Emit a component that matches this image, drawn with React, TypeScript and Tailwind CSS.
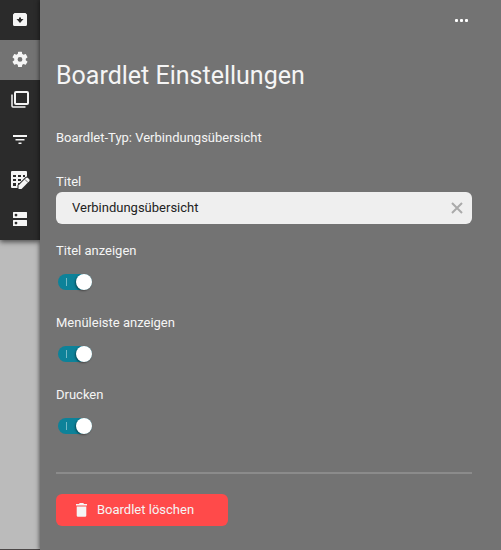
import { useState, type ReactNode } from "react";

function Icon({ children }: { children: ReactNode }) {
  return (
    <svg viewBox="0 0 20 20" className="size-5 fill-current" aria-hidden="true">
      {children}
    </svg>
  );
}

const tools: { name: string; icon: ReactNode }[] = [
  {
    name: "Archiv",
    icon: (
      <path
        fillRule="evenodd"
        d="M4.500 3h11l1.500 1.500v10a1.500 1.500 0 0 1-1.500 1.500h-11A1.500 1.500 0 0 1 3 14.500v-10zM9 7.500v1.500H6.500L10 13l3.500-4H11v-1.500z"
      />
    ),
  },
  {
    name: "Einstellungen",
    icon: (
      <path
        transform="translate(.4 -.2) scale(.8)"
        d="M19.140 12.940c.04-.3.060-.61.060-.94 0-.32-.02-.64-.07-.94l2.030-1.580a.49.49 0 0 0 .12-.61l-1.920-3.320a.49.49 0 0 0-.59-.22l-2.390.96c-.5-.38-1.030-.7-1.620-.94l-.36-2.540a.48.48 0 0 0-.48-.41h-3.840a.47.47 0 0 0-.47.41l-.36 2.540c-.59.24-1.130.57-1.620.94l-2.390-.96a.48.48 0 0 0-.59.22L2.740 8.870a.47.47 0 0 0 .12.61l2.030 1.580c-.05.3-.09.63-.09.94s.02.64.070.94l-2.030 1.580a.49.49 0 0 0-.12.61l1.920 3.320c.12.22.37.29.59.22l2.390-.96c.5.38 1.030.7 1.620.94l.36 2.540c.05.24.24.41.48.41h3.840c.24 0 .44-.17.47-.41l.36-2.540c.59-.24 1.130-.56 1.620-.94l2.390.96c.22.080.47 0 .59-.22l1.920-3.320a.47.47 0 0 0-.12-.61zM12 15A3 3 0 1 1 12 9a3 3 0 0 1 0 6"
      />
    ),
  },
  {
    name: "Ebenen",
    icon: (
      <g fill="none" stroke="currentColor">
        <rect x="5" y="2" width="13" height="12" rx="1" strokeWidth="2" />
        <path d="M2 4.500v11.500a1 1 0 0 0 1 1h12.500" strokeWidth="1.500" />
      </g>
    ),
  },
  {
    name: "Filter",
    icon: <path d="M3 5h14v2H3zM5.500 9h9v1.500h-9zM8.500 12.500h3V14h-3z" />,
  },
  {
    name: "Tabelle bearbeiten",
    icon: (
      <>
        <path
          fillRule="evenodd"
          d="M2 1h14a1 1 0 0 1 1 1v7l-8 8v1H2a1 1 0 0 1-1-1V2a1 1 0 0 1 1-1zM3 5v2h3V5zM8 5v2h3V5zM13 5v2h2V5zM3 9v2h3V9zM8 9v2h3V9zM3 13v3h3V13zM8 13v3l3-3z"
        />
        <path
          d="M8.500 15.500L16 8a1.500 1.500 0 0 1 2 0l1.200 1.200a1.500 1.500 0 0 1 0 2L11.500 19h-3z"
          stroke="#2b2b2b"
          strokeWidth="2"
          paintOrder="stroke"
        />
        <path d="M15 9.500l3 3" stroke="#2b2b2b" strokeWidth=".7" />
      </>
    ),
  },
  {
    name: "Datenspeicher",
    icon: (
      <path
        fillRule="evenodd"
        d="M3.500 2h13a.5.5 0 0 1 .5.5v5a.5.5 0 0 1-.5.5h-13a.5.5 0 0 1-.5-.5v-5a.5.5 0 0 1 .5-.5zM6 3.700a1.400 1.400 0 1 0 0 2.800 1.400 1.400 0 0 0 0-2.800zM3.500 10h13a.5.5 0 0 1 .5.5v5a.5.5 0 0 1-.5.5h-13a.5.5 0 0 1-.5-.5v-5a.5.5 0 0 1 .5-.5zM6 11.700a1.400 1.400 0 1 0 0 2.800 1.400 1.400 0 0 0 0-2.800z"
      />
    ),
  },
];

function Toggle({ id, label }: { id: string; label: string }) {
  const [on, setOn] = useState(true);
  return (
    <div className="flex h-[72px] flex-col items-start">
      <label htmlFor={id} className="leading-5">
        {label}
      </label>
      <span className="relative mt-[13px] ml-0.5 block h-4 w-[34px]">
        <input
          id={id}
          type="checkbox"
          role="switch"
          checked={on}
          onChange={(e) => setOn(e.target.checked)}
          className="peer block h-4 w-[34px] cursor-pointer appearance-none rounded-full bg-[#999] checked:bg-[#0d8299]"
        />
        <span className="pointer-events-none absolute top-1 left-2 h-2 w-px bg-[#75b9c6]" />
        <span className="pointer-events-none absolute top-0 left-0 size-4 rounded-full bg-white shadow-[-1px_1px_2px_rgba(0,0,0,0.4)] peer-checked:left-[18px]" />
      </span>
    </div>
  );
}

export default function App() {
  const [title, setTitle] = useState("Verbindungsübersicht");
  return (
    <div className="flex min-h-screen bg-[#bbb] font-['Roboto',sans-serif] text-[13px] text-[#f5f5f5]">
      <nav className="w-10 shrink-0 border-b border-[#4b4747]">
        <div className="bg-[#2b2b2b] shadow-[0_2px_5px_rgba(0,0,0,0.6)]">
          {tools.map((tool) => (
            <button
              key={tool.name}
              type="button"
              aria-label={tool.name}
              className={`flex size-10 items-center justify-center ${tool.name === "Einstellungen" ? "bg-[#737373]" : ""}`}
            >
              <Icon>{tool.icon}</Icon>
            </button>
          ))}
        </div>
      </nav>

      <main className="flex flex-1 flex-col bg-[#737373] pr-[29px] pl-4 shadow-[-1px_0_4px_rgba(0,0,0,0.5)]">
        <div className="flex h-10 items-center justify-end">
          <button type="button" aria-label="Mehr" className="flex h-6 items-center gap-0.5 pr-1 text-white">
            <span className="size-[3px] rounded-[1px] bg-current" />
            <span className="size-[3px] rounded-[1px] bg-current" />
            <span className="size-[3px] rounded-[1px] bg-current" />
          </button>
        </div>

        <h1 className="mt-5 text-[25px] leading-8">Boardlet Einstellungen</h1>
        <p className="mt-9 leading-5">Boardlet-Typ: Verbindungsübersicht</p>

        <label htmlFor="title" className="mt-6 leading-5">
          Titel
        </label>
        <div className="flex h-8 items-center rounded-md bg-[#efefef] pr-2 pl-4 text-[#222]">
          <input
            id="title"
            type="text"
            value={title}
            onChange={(e) => setTitle(e.target.value)}
            className="min-w-0 flex-1 bg-transparent outline-none"
          />
          <button type="button" aria-label="Titel leeren" onClick={() => setTitle("")} className="text-[#aaa]">
            <svg viewBox="0 0 14 14" className="size-3.5" aria-hidden="true">
              <path d="M2 2l10 10M12 2L2 12" fill="none" stroke="currentColor" strokeWidth="2" />
            </svg>
          </button>
        </div>

        <div className="mt-[17px]">
          <Toggle id="show-title" label="Titel anzeigen" />
          <Toggle id="show-menu" label="Menüleiste anzeigen" />
          <Toggle id="print" label="Drucken" />
        </div>

        <hr className="mt-[15px] border-t-2 border-[#8b8b8b]" />

        <button
          type="button"
          className="mt-5 mb-6 flex h-8 w-[172px] items-center gap-2.5 self-start rounded-md bg-[#ff4a4a] pl-5"
        >
          <svg viewBox="0 0 11 14" className="h-3.5 w-[11px] fill-current" aria-hidden="true">
            <path d="M0 1h3l.7-1h3.600L8 1h3v1.500H0zM.7 3.500h9.600V12.500a1.300 1.300 0 0 1-1.300 1.300H2A1.300 1.300 0 0 1 .7 12.500z" />
          </svg>
          Boardlet löschen
        </button>
      </main>
    </div>
  );
}
